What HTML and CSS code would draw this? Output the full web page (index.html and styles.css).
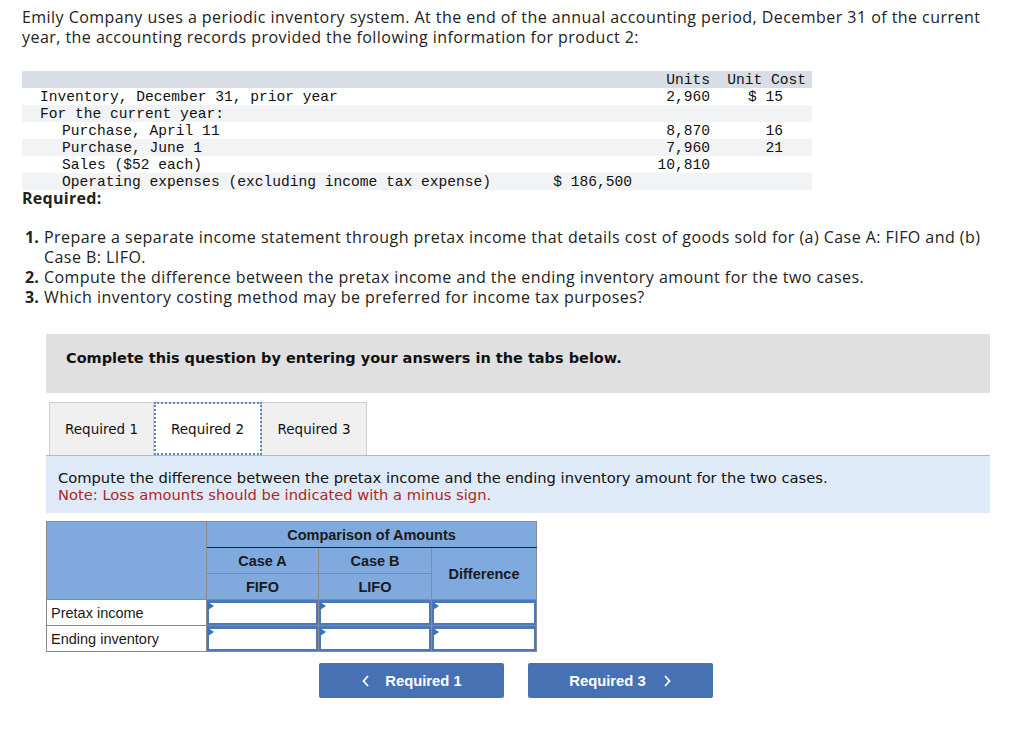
FILE: index.html
```html
<!DOCTYPE html>
<html>
<head>
<meta charset="utf-8">
<link rel="stylesheet" href="styles.css">
</head>
<body>
<div class="page">
  <p class="intro">Emily Company uses a periodic inventory system. At the end of the annual accounting period, December 31 of the current year, the accounting records provided the following information for product 2:</p>

  <table class="data">
    <colgroup><col class="c1"><col class="c2"><col class="c3"><col class="c4"></colgroup>
    <tr class="hdr"><td></td><td></td><td class="r">Units</td><td class="r">Unit Cost</td></tr>
    <tr><td class="l1">Inventory, December 31, prior year</td><td></td><td class="r">2,960</td><td class="r v">$ 15</td></tr>
    <tr class="alt"><td class="l1">For the current year:</td><td></td><td></td><td></td></tr>
    <tr><td class="l2">Purchase, April 11</td><td></td><td class="r">8,870</td><td class="r v">16</td></tr>
    <tr class="alt"><td class="l2">Purchase, June 1</td><td></td><td class="r">7,960</td><td class="r v">21</td></tr>
    <tr><td class="l2">Sales ($52 each)</td><td></td><td class="r">10,810</td><td></td></tr>
    <tr class="alt"><td class="l2">Operating expenses (excluding income tax expense)</td><td class="r">$ 186,500</td><td></td><td></td></tr>
  </table>

  <p class="req">Required:</p>
  <ol class="tasks">
    <li><b>1.</b><span>Prepare a separate income statement through pretax income that details cost of goods sold for (a) Case A: FIFO and (b) Case B: LIFO.</span></li>
    <li><b>2.</b><span>Compute the difference between the pretax income and the ending inventory amount for the two cases.</span></li>
    <li><b>3.</b><span>Which inventory costing method may be preferred for income tax purposes?</span></li>
  </ol>

  <div class="work">
    <div class="banner">Complete this question by entering your answers in the tabs below.</div>
    <div class="tabs">
      <div class="tab">Required 1</div>
      <div class="tab active">Required 2</div>
      <div class="tab">Required 3</div>
    </div>
    <div class="panel">
      <div>Compute the difference between the pretax income and the ending inventory amount for the two cases.</div>
      <div class="note">Note: Loss amounts should be indicated with a minus sign.</div>
    </div>

    <table class="cmp">
      <colgroup><col class="k0"><col class="k1"><col class="k2"><col class="k3"></colgroup>
      <tr><th rowspan="3"></th><th colspan="3" class="top">Comparison of Amounts</th></tr>
      <tr><th>Case A</th><th>Case B</th><th rowspan="2">Difference</th></tr>
      <tr><th>FIFO</th><th>LIFO</th></tr>
      <tr><td class="lbl">Pretax income</td><td class="in"><div class="box"></div></td><td class="in"><div class="box"></div></td><td class="in"><div class="box"></div></td></tr>
      <tr><td class="lbl">Ending inventory</td><td class="in"><div class="box"></div></td><td class="in"><div class="box"></div></td><td class="in"><div class="box"></div></td></tr>
    </table>

    <div class="nav">
      <div class="btn prev"><svg width="10" height="14" viewBox="0 0 10 14"><path d="M7 2 L2.5 7 L7 12" fill="none" stroke="#fff" stroke-width="1.8"/></svg><span>Required 1</span></div>
      <div class="btn next"><span>Required 3</span><svg width="10" height="14" viewBox="0 0 10 14"><path d="M3 2 L7.5 7 L3 12" fill="none" stroke="#fff" stroke-width="1.8"/></svg></div>
    </div>
  </div>
</div>
</body>
</html>
```
FILE: styles.css
```css
* { box-sizing: border-box; }
body { margin: 0; background: #fff; color: #111; }
.page { padding: 7px 0 0 22px; width: 1000px; }
.intro { margin: 0; font-family: "Open Sans", Lato, sans-serif; font-size: 16px; letter-spacing: 0.45px; line-height: 20px; color: #222; width: 965px; }

.data { margin-top: 24px; border-collapse: collapse; width: 790px; font-family: "Liberation Mono", monospace; font-size: 14.6px; color: #111; table-layout: fixed; }
.data .c1 { width: 518px; }
.data .c2 { width: 100px; }
.data .c3 { width: 78px; }
.data .c4 { width: 94px; }
.data td { height: 17px; padding: 2px 0 0 0; line-height: 15px; white-space: pre; }
.data tr.hdr { background: #d9dde5; }
.data tr.alt { background: #f2f3f5; }
.data td.l1 { padding-left: 18px; }
.data td.l2 { padding-left: 40px; }
.data td.r { text-align: right; padding-right: 8px; }
.data td.r.v { padding-right: 29px; }
.data tr.hdr td.r:last-child { padding-right: 6px; }

.req { margin: 0; font-family: "Open Sans", Lato, sans-serif; font-weight: 700; font-size: 16px; letter-spacing: 0.3px; line-height: 17px; color: #222; }
.tasks { list-style: none; margin: 20px 0 0 0; padding: 0; font-family: "Open Sans", Lato, sans-serif; font-size: 16px; letter-spacing: 0.45px; line-height: 20px; color: #222; width: 965px; }
.tasks li { display: flex; }
.tasks li b { width: 22px; padding-left: 3px; flex: none; letter-spacing: 0; }

.work { margin: 27px 0 0 24px; width: 944px; }
.banner { background: #e0e0e0; height: 59px; padding: 15px 0 0 20px; font-family: "DejaVu Sans", Verdana, sans-serif; font-weight: 700; font-size: 14.5px; line-height: 18px; color: #111; }
.tabs { display: flex; margin-top: 9px; padding-left: 3px; height: 53px; }
.tab { width: 105px; height: 53px; background: #f0f0f0; border: 1px solid #cfcfcf; border-bottom: none; display: flex; align-items: center; justify-content: center; font-family: "DejaVu Sans", Verdana, sans-serif; font-size: 13.5px; color: #111; }
.tab + .tab { border-left: none; }
.tab.active { background: #fff; outline: 2px dotted #5b84c4; outline-offset: -2px; width: 108px; }
.panel { background: #deeaf7; border-top: 1px solid #b8b8b8; height: 58px; padding: 13px 0 0 12px; font-family: "DejaVu Sans", Verdana, sans-serif; font-size: 14.7px; line-height: 17px; color: #111; }
.panel .note { color: #b0261f; }

.cmp { margin-top: 8px; border-collapse: collapse; table-layout: fixed; width: 490px; font-family: "Liberation Sans", Arial, sans-serif; font-size: 14.5px; }
.cmp .k0 { width: 160px; }
.cmp .k1 { width: 112px; }
.cmp .k2 { width: 113px; }
.cmp .k3 { width: 105px; }
.cmp th { background: #80a9de; border: 1px solid #8a8a8a; height: 26px; padding: 0; font-weight: 700; color: #1a1a1a; text-align: center; }
.cmp th.top { border-bottom: 1px solid #222; }
.cmp td { border: 1px solid #8a8a8a; height: 26px; padding: 0; }
.cmp td.lbl { padding-left: 4px; color: #1a1a1a; background: #fff; }
.cmp td.in { background: #4d77b6; padding: 1px; }
.box { position: relative; height: 22px; background: #fff; border: 1px solid #4d77b6; }
.box::before { content: ""; position: absolute; left: -1px; top: -1px; border-left: 6px solid #3f6fb5; border-top: 4px solid transparent; border-bottom: 4px solid transparent; }

.nav { display: flex; justify-content: center; gap: 24px; margin-top: 11px; padding-right: 4px; }
.btn { width: 185px; height: 35px; background: #4672b3; border-radius: 2px; color: #fff; font-family: "Liberation Sans", Arial, sans-serif; font-weight: 700; font-size: 14.8px; display: flex; align-items: center; justify-content: center; gap: 14px; }
.btn svg { display: block; }
.btn.next { gap: 16px; }
```
